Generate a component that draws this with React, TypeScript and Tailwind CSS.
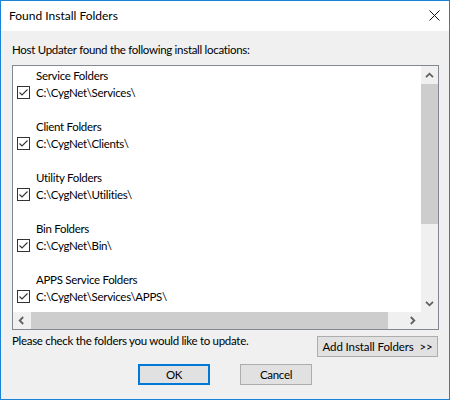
import React from "react";

const groups: [string, string][] = [
  ["Service Folders", "C:\\CygNet\\Services\\"],
  ["Client Folders", "C:\\CygNet\\Clients\\"],
  ["Utility Folders", "C:\\CygNet\\Utilities\\"],
  ["Bin Folders", "C:\\CygNet\\Bin\\"],
  ["APPS Service Folders", "C:\\CygNet\\Services\\APPS\\"],
];

function Chevron({ dir }: { dir: "up" | "down" | "left" | "right" }) {
  const rot = { up: 0, right: 90, down: 180, left: 270 }[dir];
  return (
    <svg width="9" height="9" viewBox="0 0 9 9" style={{ transform: `rotate(${rot}deg)` }}>
      <path d="M1 6.2 L4.5 2.7 L8 6.2" fill="none" stroke="#606060" strokeWidth="1.8" />
    </svg>
  );
}

function CheckBox() {
  return (
    <svg width="13" height="13" viewBox="0 0 13 13" className="shrink-0">
      <rect x="0.5" y="0.5" width="12" height="12" fill="#fff" stroke="#333333" />
      <path d="M2.5 6.5 L5 9 L10.5 3.5" fill="none" stroke="#333333" strokeWidth="1.1" />
    </svg>
  );
}

export default function App() {
  return (
    <div
      className="w-[450px] h-[400px] border border-[#1883d7] bg-[#f0f0f0] flex flex-col text-black text-[11.5px] tracking-[-0.3px] leading-[15px]"
      style={{ fontFamily: '"Lato", "Noto Sans", sans-serif' }}
    >
      {/* Title bar */}
      <div className="h-[30px] shrink-0 bg-white flex items-start justify-between">
        <span className="mt-[7px] ml-[8px] whitespace-nowrap text-[12px] tracking-normal">Found Install Folders</span>
        <svg width="11" height="11" viewBox="0 0 11 11" className="mt-[9px] mr-[9px]">
          <path d="M0.5 0.5 L10.5 10.5 M10.5 0.5 L0.5 10.5" stroke="#111" strokeWidth="1" />
        </svg>
      </div>

      {/* Client area */}
      <div className="flex-1 flex flex-col">
        <div className="mt-[11px] ml-[11px] whitespace-nowrap">
          Host Updater found the following install locations:
        </div>

        {/* List box */}
        <div className="mt-[8px] ml-[11px] mr-[10px] h-[265px] border border-[#828790] flex flex-col">
          <div className="flex h-[246px]">
            <div className="flex-1 bg-white overflow-hidden pt-[1px]">
              {groups.map(([label, path]) => (
                <div key={label} className="flex flex-col">
                  <div className="h-[17px] leading-[17px] pl-[23px] whitespace-nowrap">{label}</div>
                  <div className="h-[17px] leading-[17px] flex items-center pl-[4px] gap-[6px] whitespace-nowrap">
                    <CheckBox />
                    <span>{path}</span>
                  </div>
                  <div className="h-[17px]" />
                </div>
              ))}
            </div>
            {/* Vertical scrollbar */}
            <div className="w-[17px] bg-[#f0f0f0] flex flex-col">
              <div className="h-[17px] flex items-center justify-center pt-[2px]">
                <Chevron dir="up" />
              </div>
              <div className="mt-[1px] h-[140px] bg-[#cdcdcd]" />
              <div className="flex-1" />
              <div className="h-[17px] flex items-center justify-center">
                <Chevron dir="down" />
              </div>
            </div>
          </div>
          {/* Horizontal scrollbar */}
          <div className="flex h-[17px]">
            <div className="flex-1 bg-[#f0f0f0] flex">
              <div className="w-[17px] flex items-center justify-center">
                <Chevron dir="left" />
              </div>
              <div className="ml-[1px] w-[357px] bg-[#cdcdcd]" />
              <div className="flex-1" />
              <div className="w-[17px] flex items-center justify-center">
                <Chevron dir="right" />
              </div>
            </div>
            <div className="w-[17px] bg-[#f0f0f0]" />
          </div>
        </div>

        {/* Hint + add button */}
        <div className="mt-[3px] ml-[11px] mr-[11px] flex items-start justify-between">
          <span className="whitespace-nowrap">Please check the folders you would like to update.</span>
          <button className="mt-[3px] w-[121px] h-[21px] border border-[#adadad] bg-[#e1e1e1] flex items-center justify-center whitespace-pre tracking-[-0.1px]">
            {"Add Install Folders  >>"}
          </button>
        </div>

        {/* OK / Cancel */}
        <div className="mt-[7px] flex justify-center gap-[30px]">
          <button className="w-[72px] h-[21px] border-2 border-[#0078d7] bg-[#e1e1e1] flex items-center justify-center">
            OK
          </button>
          <button className="w-[72px] h-[21px] border border-[#adadad] bg-[#e1e1e1] flex items-center justify-center">
            Cancel
          </button>
        </div>
      </div>
    </div>
  );
}
